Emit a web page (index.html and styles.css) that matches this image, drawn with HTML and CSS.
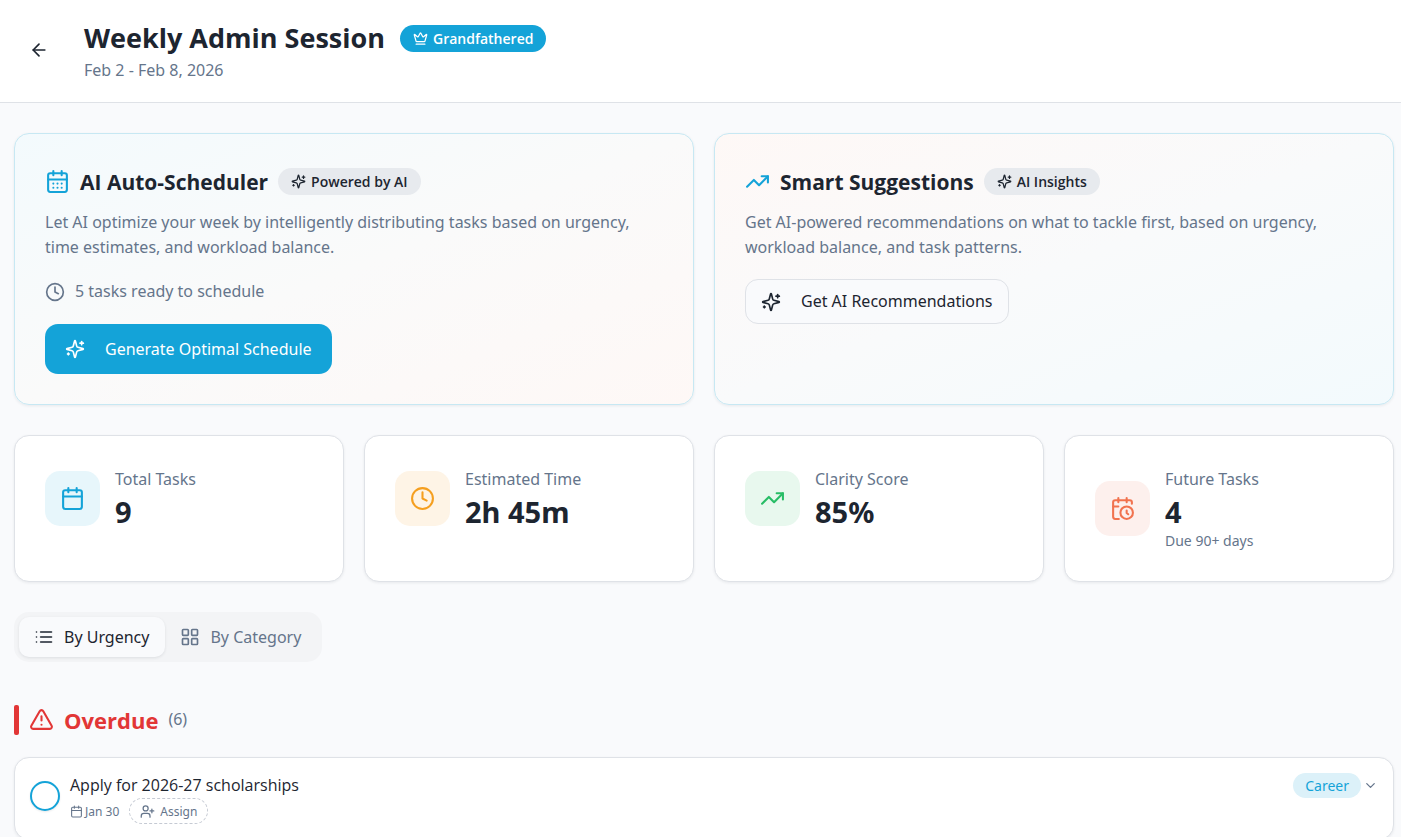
FILE: index.html
```html
<!DOCTYPE html>
<html lang="en">
<head>
    <meta charset="UTF-8">
    <meta name="viewport" content="width=device-width, initial-scale=1.0">
    <title>Weekly Admin Session</title>
    <link rel="stylesheet" href="styles.css">
</head>
<body>
    <!-- Icon sprite -->
    <svg class="sprite" aria-hidden="true">
        <symbol id="arrow-left" viewBox="0 0 24 24"><path d="m12 19-7-7 7-7"/><path d="M19 12H5"/></symbol>
        <symbol id="crown" viewBox="0 0 24 24"><path d="M11.562 3.266a.5.5 0 0 1 .876 0L15.39 8.87a1 1 0 0 0 1.516.294L21.183 5.5a.5.5 0 0 1 .798.519l-2.834 10.246a1 1 0 0 1-.956.734H5.81a1 1 0 0 1-.957-.734L2.02 6.02a.5.5 0 0 1 .798-.519l4.276 3.664a1 1 0 0 0 1.516-.294z"/><path d="M5 21h14"/></symbol>
        <symbol id="calendar" viewBox="0 0 24 24"><path d="M8 2v4"/><path d="M16 2v4"/><rect width="18" height="18" x="3" y="4" rx="2"/><path d="M3 10h18"/></symbol>
        <symbol id="calendar-days" viewBox="0 0 24 24"><path d="M8 2v4"/><path d="M16 2v4"/><rect width="18" height="18" x="3" y="4" rx="2"/><path d="M3 10h18"/><path d="M8 14h.01"/><path d="M12 14h.01"/><path d="M16 14h.01"/><path d="M8 18h.01"/><path d="M12 18h.01"/><path d="M16 18h.01"/></symbol>
        <symbol id="calendar-clock" viewBox="0 0 24 24"><path d="M21 7.5V6a2 2 0 0 0-2-2H5a2 2 0 0 0-2 2v14a2 2 0 0 0 2 2h3.5"/><path d="M16 2v4"/><path d="M8 2v4"/><path d="M3 10h5"/><path d="M17.5 17.5 16 16.3V14"/><circle cx="16" cy="16" r="6"/></symbol>
        <symbol id="sparkles" viewBox="0 0 24 24"><path d="M9.937 15.5A2 2 0 0 0 8.5 14.063l-6.135-1.582a.5.5 0 0 1 0-.962L8.5 9.936A2 2 0 0 0 9.937 8.5l1.582-6.135a.5.5 0 0 1 .963 0L14.063 8.5A2 2 0 0 0 15.5 9.937l6.135 1.581a.5.5 0 0 1 0 .964L15.5 14.063a2 2 0 0 0-1.437 1.437l-1.582 6.135a.5.5 0 0 1-.963 0z"/><path d="M20 3v4"/><path d="M22 5h-4"/><path d="M4 17v2"/><path d="M5 18H3"/></symbol>
        <symbol id="trending-up" viewBox="0 0 24 24"><path d="m22 7-8.500 8.500-5-5L2 17"/><path d="M16 7h6v6"/></symbol>
        <symbol id="clock" viewBox="0 0 24 24"><circle cx="12" cy="12" r="10"/><path d="M12 6v6l4 2"/></symbol>
        <symbol id="list" viewBox="0 0 24 24"><path d="M8 6h13"/><path d="M8 12h13"/><path d="M8 18h13"/><path d="M3 6h.01"/><path d="M3 12h.01"/><path d="M3 18h.01"/></symbol>
        <symbol id="layout-grid" viewBox="0 0 24 24"><rect width="7" height="7" x="3" y="3" rx="1"/><rect width="7" height="7" x="14" y="3" rx="1"/><rect width="7" height="7" x="14" y="14" rx="1"/><rect width="7" height="7" x="3" y="14" rx="1"/></symbol>
        <symbol id="triangle-alert" viewBox="0 0 24 24"><path d="m21.73 18-8-14a2 2 0 0 0-3.480 0l-8 14A2 2 0 0 0 4 21h16a2 2 0 0 0 1.730-3"/><path d="M12 9v4"/><path d="M12 17h.01"/></symbol>
        <symbol id="user-plus" viewBox="0 0 24 24"><path d="M16 21v-2a4 4 0 0 0-4-4H6a4 4 0 0 0-4 4v2"/><circle cx="9" cy="7" r="4"/><path d="M19 8v6"/><path d="M22 11h-6"/></symbol>
        <symbol id="chevron-down" viewBox="0 0 24 24"><path d="m6 9 6 6 6-6"/></symbol>
    </svg>

    <header class="header">
        <button class="back-btn" type="button" aria-label="Go back"><svg class="icon"><use href="#arrow-left"/></svg></button>
        <div>
            <div class="title-row">
                <h1>Weekly Admin Session</h1>
                <span class="badge badge-primary"><svg class="icon icon-sm"><use href="#crown"/></svg>Grandfathered</span>
            </div>
            <p class="subtitle">Feb 2 - Feb 8, 2026</p>
        </div>
    </header>

    <main class="container">
        <div class="ai-grid">
            <section class="card ai-card">
                <div class="card-title">
                    <svg class="icon icon-lg"><use href="#calendar-days"/></svg>
                    <h2>AI Auto-Scheduler</h2>
                    <span class="badge"><svg class="icon icon-sm"><use href="#sparkles"/></svg>Powered by AI</span>
                </div>
                <p class="description">Let AI optimize your week by intelligently distributing tasks based on urgency, time estimates, and workload balance.</p>
                <p class="ready"><svg class="icon"><use href="#clock"/></svg>5 tasks ready to schedule</p>
                <button class="btn btn-primary" type="button"><svg class="icon"><use href="#sparkles"/></svg>Generate Optimal Schedule</button>
            </section>

            <section class="card ai-card ai-card-reverse">
                <div class="card-title">
                    <svg class="icon icon-lg"><use href="#trending-up"/></svg>
                    <h2>Smart Suggestions</h2>
                    <span class="badge"><svg class="icon icon-sm"><use href="#sparkles"/></svg>AI Insights</span>
                </div>
                <p class="description">Get AI-powered recommendations on what to tackle first, based on urgency, workload balance, and task patterns.</p>
                <button class="btn btn-outline" type="button"><svg class="icon"><use href="#sparkles"/></svg>Get AI Recommendations</button>
            </section>
        </div>

        <div class="stats-grid">
            <div class="card stat">
                <span class="stat-icon blue"><svg class="icon icon-lg"><use href="#calendar"/></svg></span>
                <div>
                    <p class="stat-label">Total Tasks</p>
                    <p class="stat-value">9</p>
                </div>
            </div>
            <div class="card stat">
                <span class="stat-icon amber"><svg class="icon icon-lg"><use href="#clock"/></svg></span>
                <div>
                    <p class="stat-label">Estimated Time</p>
                    <p class="stat-value">2h 45m</p>
                </div>
            </div>
            <div class="card stat">
                <span class="stat-icon green"><svg class="icon icon-lg"><use href="#trending-up"/></svg></span>
                <div>
                    <p class="stat-label">Clarity Score</p>
                    <p class="stat-value">85%</p>
                </div>
            </div>
            <div class="card stat">
                <span class="stat-icon coral"><svg class="icon icon-lg"><use href="#calendar-clock"/></svg></span>
                <div>
                    <p class="stat-label">Future Tasks</p>
                    <p class="stat-value">4</p>
                    <p class="stat-note">Due 90+ days</p>
                </div>
            </div>
        </div>

        <div class="tabs" role="tablist">
            <button class="tab active" type="button" role="tab" aria-selected="true"><svg class="icon"><use href="#list"/></svg>By Urgency</button>
            <button class="tab" type="button" role="tab" aria-selected="false"><svg class="icon"><use href="#layout-grid"/></svg>By Category</button>
        </div>

        <section class="group">
            <div class="group-header">
                <span class="group-bar"></span>
                <svg class="icon icon-lg"><use href="#triangle-alert"/></svg>
                <h2>Overdue</h2>
                <span class="group-count">(6)</span>
            </div>

            <article class="card task">
                <input class="task-check" type="checkbox" id="task-1">
                <div class="task-body">
                    <label class="task-title" for="task-1">Apply for 2026-27 scholarships</label>
                    <div class="task-meta">
                        <span class="task-date"><svg class="icon icon-xs"><use href="#calendar"/></svg>Jan 30</span>
                        <button class="assign-btn" type="button"><svg class="icon icon-sm"><use href="#user-plus"/></svg>Assign</button>
                    </div>
                </div>
                <div class="task-side">
                    <span class="category">Career</span>
                    <button class="expand-btn" type="button" aria-label="Show details"><svg class="icon icon-sm"><use href="#chevron-down"/></svg></button>
                </div>
            </article>
        </section>
    </main>
</body>
</html>
```

FILE: styles.css
```css
:root {
    --background: #f9fafc;
    --foreground: #1d2530;
    --muted: #65758b;
    --border: #dfe2e7;
    --primary: #14a3d8;
    --danger: #e23636;
}

* {
    margin: 0;
    padding: 0;
    box-sizing: border-box;
}

body {
    font-family: 'Noto Sans', 'Open Sans', sans-serif;
    font-size: 16px;
    line-height: 25px;
    background: var(--background);
    color: var(--foreground);
}

h1,
h2,
.badge,
.task-title {
    font-family: 'Open Sans', 'Noto Sans', sans-serif;
}

button {
    font: inherit;
    color: inherit;
    background: none;
    border: none;
    cursor: pointer;
}

.sprite {
    display: none;
}

.icon {
    width: 20px;
    height: 20px;
    flex-shrink: 0;
    fill: none;
    stroke: currentColor;
    stroke-width: 2;
    stroke-linecap: round;
    stroke-linejoin: round;
}

.icon-xs {
    width: 13px;
    height: 13px;
}

.icon-sm {
    width: 15px;
    height: 15px;
}

.icon-lg {
    width: 25px;
    height: 25px;
}

/* Header */
.header {
    display: flex;
    align-items: flex-start;
    gap: 20px;
    padding: 20px 14px 17px;
    background: #fff;
    border-bottom: 1px solid var(--border);
}

.back-btn {
    display: flex;
    align-items: center;
    justify-content: center;
    width: 50px;
    height: 60px;
}

.title-row {
    display: flex;
    align-items: center;
    gap: 15px;
}

.header h1 {
    font-size: 27px;
    line-height: 36px;
    font-weight: 700;
}

.subtitle {
    line-height: 29px;
    color: var(--muted);
}

.badge {
    display: inline-flex;
    align-items: center;
    gap: 5px;
    height: 27px;
    padding: 0 13px;
    border-radius: 14px;
    font-size: 14px;
    font-weight: 600;
    white-space: nowrap;
    background: #e7eaee;
}

.badge-primary {
    background: var(--primary);
    color: #fff;
}

.container {
    padding: 30px 7px 20px 14px;
}

.card {
    background: #fff;
    border: 1px solid var(--border);
    border-radius: 15px;
    box-shadow: 0 1px 3px rgba(29, 37, 48, 0.08);
}

/* AI panels */
.ai-grid {
    display: grid;
    grid-template-columns: 1fr 1fr;
    gap: 20px;
    margin-bottom: 30px;
}

.ai-card {
    padding: 30px;
    border-color: #c7e8f3;
    background: linear-gradient(to bottom right, #f3fafd, #fafafa 50%, #fef8f6);
}

.ai-card-reverse {
    background: linear-gradient(to bottom right, #fef8f6, #f9fafb 50%, #f3fafd);
}

.card-title {
    display: flex;
    align-items: center;
    gap: 10px;
    height: 35px;
    margin-bottom: 11px;
}

.card-title .icon-lg {
    color: var(--primary);
}

.card-title h2 {
    font-size: 21px;
    line-height: 30px;
    font-weight: 700;
}

.description {
    margin-bottom: 19px;
    color: var(--muted);
}

.ready {
    display: flex;
    align-items: center;
    gap: 10px;
    margin-bottom: 20px;
    color: var(--muted);
}

.btn {
    display: inline-flex;
    align-items: center;
    gap: 20px;
    border-radius: 13px;
}

.btn-primary {
    height: 50px;
    padding: 0 20px;
    background: var(--primary);
    color: #fff;
}

.btn-outline {
    height: 45px;
    padding: 0 15px;
    border: 1px solid var(--border);
    background: var(--background);
}

/* Stats */
.stats-grid {
    display: grid;
    grid-template-columns: repeat(4, 1fr);
    gap: 20px;
    margin-bottom: 30px;
}

.stat {
    display: flex;
    align-items: flex-start;
    gap: 15px;
    padding: 30px;
}

.stat > div {
    flex: 1;
}

.stat-icon {
    display: flex;
    align-items: center;
    justify-content: center;
    width: 55px;
    height: 55px;
    margin-top: 5px;
    border-radius: 15px;
}

.blue {
    background: #e7f6fb;
    color: var(--primary);
}

.amber {
    background: #fef4e6;
    color: #f59f1f;
}

.green {
    background: #e8f8ee;
    color: #28bd66;
}

.coral {
    align-self: center;
    margin-top: 0;
    background: #fdf0ed;
    color: #f1734f;
}

.stat-label {
    line-height: 27px;
    color: var(--muted);
}

.stat-value {
    font-size: 29px;
    line-height: 38px;
    font-weight: 700;
}

.stat-note {
    font-size: 14px;
    line-height: 20px;
    color: var(--muted);
}

/* View switch */
.tabs {
    display: inline-flex;
    padding: 5px;
    border-radius: 15px;
    background: #f3f4f6;
    color: var(--muted);
}

.tab {
    display: flex;
    align-items: center;
    gap: 10px;
    height: 40px;
    padding: 0 16px 0 15px;
    border-radius: 10px;
}

.tab.active {
    background: var(--background);
    color: var(--foreground);
    box-shadow: 0 1px 3px rgba(29, 37, 48, 0.1);
}

/* Task groups */
.group {
    margin-top: 40px;
}

.group-header {
    display: flex;
    align-items: center;
    gap: 10px;
    height: 35px;
    margin-bottom: 20px;
    color: var(--danger);
}

.group-header h2 {
    font-size: 22px;
    line-height: 30px;
    font-weight: 700;
}

.group-bar {
    width: 5px;
    height: 30px;
    border-radius: 2px;
    background: var(--danger);
}

.group-count {
    color: var(--muted);
}

.task {
    display: flex;
    align-items: flex-start;
    gap: 10px;
    padding: 15px;
}

.task-check {
    appearance: none;
    width: 30px;
    height: 30px;
    margin-top: 8px;
    border: 2px solid var(--primary);
    border-radius: 50%;
    background: #fff;
    box-shadow: 0 1px 2px rgba(29, 37, 48, 0.1);
}

.task-body {
    flex: 1;
}

.task-title {
    display: block;
}

.task-meta {
    display: flex;
    align-items: center;
    gap: 10px;
    font-size: 12px;
    color: var(--muted);
}

.task-date {
    display: flex;
    align-items: center;
    gap: 2px;
}

.assign-btn {
    display: flex;
    align-items: center;
    gap: 5px;
    height: 26px;
    padding: 0 10px;
    border: 1px dashed #c5cad3;
    border-radius: 13px;
}

.task-side {
    display: flex;
    align-items: center;
    gap: 2px;
}

.category {
    padding: 0 12px;
    border-radius: 13px;
    font-size: 14px;
    background: #dcf1f9;
    color: var(--primary);
}

.expand-btn {
    display: flex;
    color: var(--muted);
}

@media (max-width: 900px) {
    .ai-grid {
        grid-template-columns: 1fr;
    }

    .stats-grid {
        grid-template-columns: 1fr 1fr;
    }
}
```
